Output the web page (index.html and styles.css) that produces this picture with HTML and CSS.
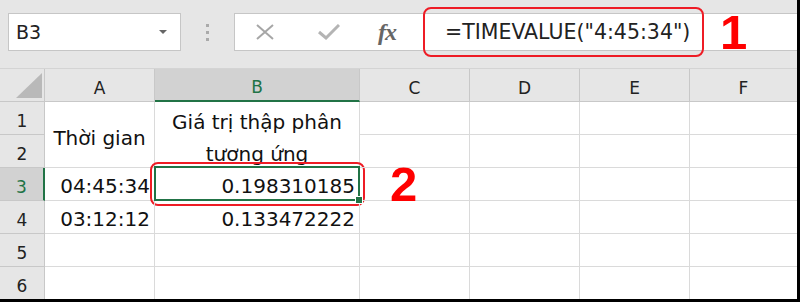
FILE: index.html
```html
<!DOCTYPE html>
<html lang="vi">
<head>
    <meta charset="UTF-8">
    <meta name="viewport" content="width=device-width, initial-scale=1.0">
    <title>TIMEVALUE</title>
    <link rel="stylesheet" href="styles.css">
</head>
<body>
    <div class="excel">
        <div class="toolbar">
            <div class="name-box">
                <span class="name">B3</span>
                <span class="drop"></span>
            </div>
            <div class="grip"><i></i><i></i><i></i></div>
            <div class="formula-bar">
                <div class="fb-icons">
                    <svg class="fb-x" width="20" height="16" viewBox="0 0 20 16">
                        <path d="M2 1 L18 15 M18 1 L2 15" stroke="#a6a6a6" stroke-width="2" fill="none"/>
                    </svg>
                    <svg class="fb-check" width="22" height="16" viewBox="0 0 22 16">
                        <path d="M1 8 L8 14 L21 1" stroke="#b4b4b4" stroke-width="3" fill="none"/>
                    </svg>
                    <span class="fx">fx</span>
                </div>
                <div class="formula">=TIMEVALUE("4:45:34")</div>
                <span class="mark">1</span>
            </div>
        </div>

        <div class="sheet">
            <!-- заголовки столбцов -->
            <div class="hd corner">
                <svg width="26" height="25" viewBox="0 0 26 25"><polygon points="26,0 26,25 0,25" fill="#b9b9b9"/></svg>
            </div>
            <div class="hd col">A</div>
            <div class="hd col active">B</div>
            <div class="hd col">C</div>
            <div class="hd col">D</div>
            <div class="hd col">E</div>
            <div class="hd col last">F</div>

            <!-- номера строк -->
            <div class="hd row r1">1</div>
            <div class="hd row r2">2</div>
            <div class="hd row r3 active">3</div>
            <div class="hd row r4">4</div>
            <div class="hd row r5">5</div>
            <div class="hd row r6">6</div>

            <div class="cell a12">Thời gian</div>
            <div class="cell b12">Giá trị thập phân tương ứng</div>
            <div class="cell num a3">04:45:34</div>
            <div class="cell num b3 selected">0.198310185<span class="handle"></span></div>
            <div class="cell num a4">03:12:12</div>
            <div class="cell num b4">0.133472222</div>

            <div class="cell c1"></div><div class="cell d1"></div><div class="cell e1"></div><div class="cell f1 last"></div>
            <div class="cell c2"></div><div class="cell d2"></div><div class="cell e2"></div><div class="cell f2 last"></div>
            <div class="cell c3"><span class="mark">2</span></div><div class="cell d3"></div><div class="cell e3"></div><div class="cell f3 last"></div>
            <div class="cell c4"></div><div class="cell d4"></div><div class="cell e4"></div><div class="cell f4 last"></div>
            <div class="cell a5"></div><div class="cell b5"></div><div class="cell c5"></div><div class="cell d5"></div><div class="cell e5"></div><div class="cell f5 last"></div>
            <div class="cell a6"></div><div class="cell b6"></div><div class="cell c6"></div><div class="cell d6"></div><div class="cell e6"></div><div class="cell f6 last"></div>
        </div>
    </div>
</body>
</html>
```

FILE: styles.css
```css
body {
    margin: 0;
    background-color: #000;
    font-family: "DejaVu Sans", "Open Sans", sans-serif;
}
.excel {
    width: 797px;
    height: 299px;
    overflow: hidden;
    background-color: #fff;
}

/* Верхняя панель */
.toolbar {
    height: 69px;
    box-sizing: border-box;
    padding: 13px 0 0 8px;
    background-color: #e6e6e6;
    border-bottom: 1px solid #d4d4d4;
    display: flex;
    align-items: flex-start;
}
.name-box {
    width: 173px;
    height: 38px;
    box-sizing: border-box;
    background-color: #fff;
    border: 1px solid #c6c6c6;
    display: flex;
    align-items: center;
    justify-content: space-between;
    padding: 0 13px 0 7px;
}
.name {
    font-size: 19px;
    color: #222;
}
.drop {
    width: 0;
    height: 0;
    border-left: 4px solid transparent;
    border-right: 4px solid transparent;
    border-top: 4px solid #666;
}
.grip {
    width: 53px;
    height: 38px;
    display: flex;
    flex-direction: column;
    align-items: center;
    justify-content: center;
    gap: 4px;
}
.grip i {
    width: 3px;
    height: 3px;
    background-color: #aaa;
}
.formula-bar {
    flex: 1;
    height: 38px;
    box-sizing: border-box;
    background-color: #fff;
    border: 1px solid #c6c6c6;
    border-right: none;
    display: flex;
    align-items: center;
}
.fb-icons {
    width: 188px;
    display: flex;
    align-items: center;
    padding-left: 20px;
    box-sizing: border-box;
}
.fb-check {
    margin-left: 43px;
}
.fx {
    margin-left: 38px;
    font-family: "Liberation Serif", "DejaVu Serif", serif;
    font-style: italic;
    font-weight: bold;
    font-size: 24px;
    color: #666;
    letter-spacing: -1px;
}
/* красная рамка-выноска вокруг формулы */
.formula {
    flex: none;
    width: 281px;
    height: 50px;
    box-sizing: border-box;
    border: 2px solid #ee1c25;
    border-radius: 8px;
    display: flex;
    align-items: center;
    padding-left: 20px;
    font-size: 20.5px;
    color: #222;
    white-space: nowrap;
}
.mark {
    font-family: "Liberation Sans", Arial, sans-serif;
    font-weight: bold;
    font-size: 49px;
    line-height: 1;
    color: #ff0000;
}
.formula-bar .mark {
    margin-left: 16px;
}

/* Лист */
.sheet {
    display: grid;
    grid-template-columns: 45px 110px 205px 110px 110px 110px 107px;
    grid-template-rows: 33px repeat(6, 33px);
}
.hd {
    background-color: #e6e6e6;
    box-sizing: border-box;
    border-right: 1px solid #c8c8c8;
    border-bottom: 1px solid #c8c8c8;
    display: flex;
    align-items: center;
    justify-content: center;
    padding-top: 5px;
    font-size: 17px;
    color: #222;
}
.hd.col.last {
    border-right: none;
}
.hd.active {
    background-color: #d2d2d2;
    color: #217346;
}
.hd.col.active {
    border-bottom: 2px solid #217346;
}
.hd.row.active {
    border-right: 2px solid #217346;
}
.corner {
    align-items: flex-end;
    justify-content: flex-end;
    padding: 0 2px 3px 0;
}
.hd.row { grid-column: 1; }
.r1 { grid-row: 2; }
.r2 { grid-row: 3; }
.r3 { grid-row: 4; }
.r4 { grid-row: 5; }
.r5 { grid-row: 6; }
.r6 { grid-row: 7; }

.cell {
    box-sizing: border-box;
    border-right: 1px solid #dadada;
    border-bottom: 1px solid #dadada;
    font-size: 20px;
    line-height: 24px;
    color: #111;
    display: flex;
    align-items: flex-end;
    padding-bottom: 2px;
    position: relative;
}
.cell.last {
    border-right: none;
}
.cell.num {
    justify-content: flex-end;
    padding-right: 4px;
}
.a12 {
    grid-column: 2;
    grid-row: 2 / span 2;
    justify-content: center;
    align-items: center;
    padding: 6px 0 0;
}
.b12 {
    grid-column: 3;
    grid-row: 2 / span 2;
    justify-content: center;
    align-items: center;
    text-align: center;
    line-height: 32px;
    padding: 6px 12px 0;
}
.a3 { grid-column: 2; grid-row: 4; }
.b3 { grid-column: 3; grid-row: 4; }
.a4 { grid-column: 2; grid-row: 5; }
.b4 { grid-column: 3; grid-row: 5; }
.a5 { grid-column: 2; grid-row: 6; }
.b5 { grid-column: 3; grid-row: 6; }
.a6 { grid-column: 2; grid-row: 7; }
.b6 { grid-column: 3; grid-row: 7; }

/* выделенная ячейка B3 */
.selected::after {
    content: "";
    position: absolute;
    left: -1px;
    top: -2px;
    right: -1px;
    bottom: -1px;
    border: 2px solid #217346;
}
.selected::before {
    content: "";
    position: absolute;
    left: -5px;
    top: -6px;
    right: -6px;
    bottom: -6px;
    border: 2px solid #ee1c25;
    border-radius: 8px;
}
.handle {
    position: absolute;
    right: -4px;
    bottom: -4px;
    width: 6px;
    height: 6px;
    background-color: #217346;
    border: 1px solid #fff;
    z-index: 1;
}
.c3 {
    align-items: center;
    padding-bottom: 0;
}
.c3 .mark {
    margin-left: 30px;
}
```
